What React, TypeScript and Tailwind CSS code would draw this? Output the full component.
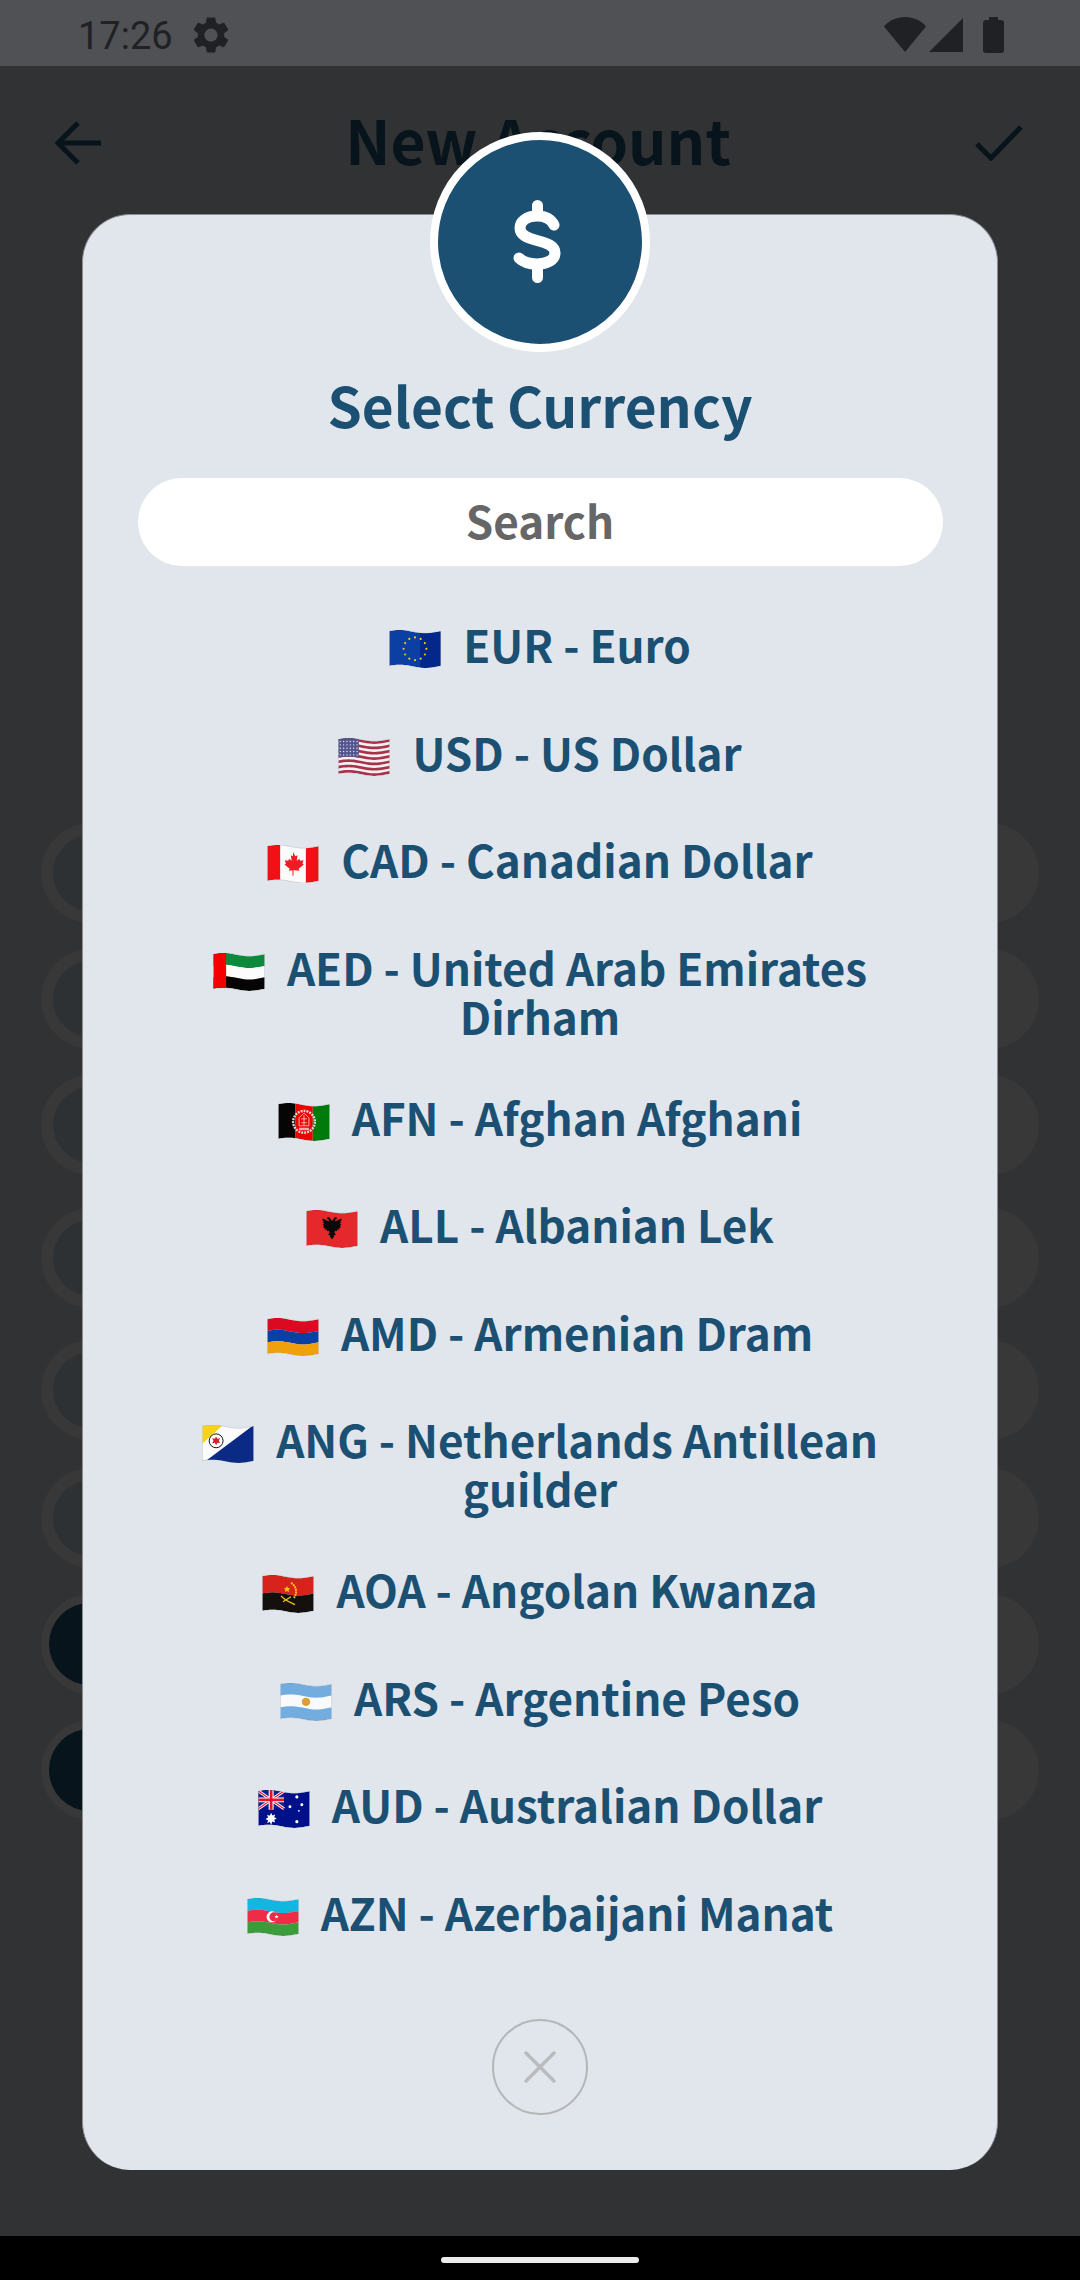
import { useId, type ReactNode } from 'react'

const FONT = "font-['Noto_Sans_CJK_SC','Noto_Sans',sans-serif]"

/* ── Flag helpers: the wave is a small sine over the flag cloth ── */
const W = 52
const H = 35
const waveTop = (u: number) => 1.65 - 1.65 * Math.sin(2 * Math.PI * (u + 0.05))
const pt = (u: number, t: number) => `${(u * W).toFixed(2)},${(waveTop(u) + t * H).toFixed(2)}`

function region(u0: number, u1: number, t0: number, t1: number) {
  const top: string[] = []
  const bottom: string[] = []
  for (let i = 0; i <= 20; i++) {
    const u = u0 + ((u1 - u0) * i) / 20
    top.push(pt(u, t0))
    bottom.unshift(pt(u, t1))
  }
  return [...top, ...bottom].join(' ')
}

const Band = ({ u = [0, 1], t = [0, 1], fill }: { u?: number[]; t?: number[]; fill: string }) => (
  <polygon points={region(u[0], u[1], t[0], t[1])} fill={fill} />
)

function Flag({ children }: { children: ReactNode }) {
  const id = useId()
  return (
    <svg viewBox="0 0 52 38.4" className="-my-[10px] mr-[22px] inline-block h-[38px] w-[52px] align-[5px]">
      <clipPath id={id}>
        <polygon points={region(0, 1, 0, 1)} />
      </clipPath>
      <g clipPath={`url(#${id})`}>{children}</g>
      <polygon points={region(0, 1, 0, 1)} fill="none" stroke="#000" strokeOpacity="0.12" strokeWidth="0.8" />
    </svg>
  )
}

const ringStars = Array.from({ length: 12 }, (_, i) => {
  const a = (i * Math.PI) / 6
  return [26 + 11.5 * Math.sin(a), 19 - 11.5 * Math.cos(a)]
})

const EurFlag = () => (
  <Flag>
    <Band fill="#0b3fa3" />
    <Band u={[0.6, 1]} fill="#03278a" />
    {ringStars.map(([x, y], i) => (
      <circle key={i} cx={x} cy={y} r="1.1" fill="#f5c518" />
    ))}
  </Flag>
)

const UsdFlag = () => (
  <Flag>
    <Band fill="#f4f1f2" />
    {[0, 2, 4, 6, 8, 10, 12].map((i) => (
      <Band key={i} t={[i / 13, (i + 1) / 13]} fill="#a8324a" />
    ))}
    <Band u={[0, 0.4]} t={[0, 7 / 13]} fill="#55568f" />
    {Array.from({ length: 30 }, (_, i) => (
      <circle key={i} cx={2 + (i % 6) * 3.4} cy={3.5 + Math.floor(i / 6) * 3.4} r="0.7" fill="#e6e6f2" />
    ))}
  </Flag>
)

const CadFlag = () => (
  <Flag>
    <Band fill="#fbfbfb" />
    <Band u={[0, 0.25]} fill="#f20f16" />
    <Band u={[0.75, 1]} fill="#f20f16" />
    <path
      d="M26 7l2.4 4.4 2.2-1-.8 5.6 2.6-2 .8 2 3.4-.6-1 3.6 1.4.8-5.2 4.2.6 2-4.6-.6-1.2 0-4.6.6.6-2-5.2-4.2 1.4-.8-1-3.6 3.4.6.8-2 2.6 2-.8-5.6 2.2 1z"
      fill="#ee1c25"
    />
    <rect x="25.5" y="25" width="1" height="6" fill="#ee1c25" />
  </Flag>
)

const AedFlag = () => (
  <Flag>
    <Band t={[0, 0.34]} fill="#0b8a3c" />
    <Band t={[0.34, 0.67]} fill="#fcfcfc" />
    <Band t={[0.67, 1]} fill="#050505" />
    <Band u={[0, 0.25]} fill="#f40000" />
  </Flag>
)

const AfnFlag = () => (
  <Flag>
    <Band u={[0, 0.33]} fill="#050505" />
    <Band u={[0.33, 0.67]} fill="#ee0000" />
    <Band u={[0.67, 1]} fill="#007a0a" />
    <circle cx="26" cy="19" r="11" fill="none" stroke="#d9d9d9" strokeWidth="2.4" strokeDasharray="2 1" />
    <path d="M26 10l5 5v8H21v-8zM26 12v11M23 16h6M23 20h6" fill="none" stroke="#ffc9c9" strokeWidth="1" strokeOpacity="0.85" />
    <rect x="21" y="25" width="10" height="2.500" fill="#f5f5f5" fillOpacity="0.7" />
  </Flag>
)

/* half of the eagle, mirrored around x = 26 */
const eagleHalf = [
  [0, 11], [1.5, 9], [3, 7], [5.5, 8], [3.5, 9.5], [3, 11.5], [5, 10.5], [9.5, 8.5], [9.5, 11], [8, 11.5],
  [9.5, 13], [8, 13.5], [9.5, 15.5], [8, 16], [9, 18], [7, 18], [7.5, 20], [5.5, 19.5], [5, 21.5], [3, 21],
  [2.5, 23], [4, 25], [2, 25.5], [2, 27], [0, 29.5],
]
const eaglePoints = [
  ...eagleHalf.map(([x, y]) => `${26 + x},${y}`),
  ...[...eagleHalf].reverse().map(([x, y]) => `${26 - x},${y}`),
].join(' ')

const AllFlag = () => (
  <Flag>
    <Band fill="#e4282c" />
    <polygon points={eaglePoints} fill="#0a0a0a" />
  </Flag>
)

const AmdFlag = () => (
  <Flag>
    <Band t={[0, 0.34]} fill="#dc0a20" />
    <Band t={[0.34, 0.67]} fill="#0a3fa6" />
    <Band t={[0.67, 1]} fill="#f0a00a" />
  </Flag>
)

const AngFlag = () => (
  <Flag>
    <Band fill="#fbfbfb" />
    <polygon points="0,0 21,0 0,19" fill="#f6d21c" />
    <polygon points="0,39 52,0 52,39" fill="#0a2a85" />
    <circle cx="14" cy="16" r="7" fill="#fff" stroke="#111" strokeWidth="1" />
    <path d="M14 11.500l1.300 2.500 2.700-.5-1.300 2.500 1.300 2.500-2.700-.5-1.300 2.500-1.300-2.500-2.700.5 1.300-2.500-1.300-2.500 2.700.5z" fill="#d8202a" />
  </Flag>
)

const AoaFlag = () => (
  <Flag>
    <Band t={[0, 0.5]} fill="#d8231c" />
    <Band t={[0.5, 1]} fill="#14100e" />
    <path d="M29 8a10 10 0 0 1 3 15" fill="none" stroke="#f5c518" strokeWidth="2" strokeDasharray="2 .6" />
    <path d="M19 21c3 4 8 6 14 9M21 27l8-5" fill="none" stroke="#f5c518" strokeWidth="1.300" />
    <path d="M25 11l1 2.200 2.300.2-1.700 1.600.5 2.300-2.100-1.200-2.100 1.200.5-2.300-1.700-1.600 2.300-.2z" fill="#f5c518" />
  </Flag>
)

const ArsFlag = () => (
  <Flag>
    <Band fill="#f8fafc" />
    <Band t={[0, 0.33]} fill="#73ade0" />
    <Band t={[0.67, 1]} fill="#73ade0" />
    <circle cx="26" cy="19" r="3.700" fill="#e0a030" stroke="#c98a1e" strokeWidth="0.8" />
  </Flag>
)

const AudFlag = () => (
  <Flag>
    <Band fill="#00108a" />
    <Band u={[0, 0.5]} t={[0, 0.5]} fill="#10208f" />
    <path d="M0 1l26 18M26 1L0 19" stroke="#fff" strokeWidth="3" />
    <path d="M0 1l26 18M26 1L0 19" stroke="#e8112d" strokeWidth="1.100" />
    <path d="M13 0v20M0 10h26" stroke="#fff" strokeWidth="5" />
    <path d="M13 0v20M0 10h26" stroke="#e8112d" strokeWidth="2.800" />
    <path d="M13 23l1.300 2.700 2.800-1-1 2.800 2.700 1.300-2.700 1.300 1 2.800-2.800-1L13 35l-1.300-2.700-2.800 1 1-2.800-2.700-1.300 2.700-1.300-1-2.800 2.800 1z" fill="#fff" />
    {[
      [39, 7, 1.6],
      [32, 17, 1.5],
      [44, 15, 1.5],
      [41, 21, 0.9],
      [39, 32, 1.6],
    ].map(([x, y, r], i) => (
      <circle key={i} cx={x} cy={y} r={r} fill="#fff" />
    ))}
  </Flag>
)

const AznFlag = () => (
  <Flag>
    <Band t={[0, 0.34]} fill="#12b7e0" />
    <Band t={[0.34, 0.67]} fill="#ee2c48" />
    <Band t={[0.67, 1]} fill="#3c9c3c" />
    <circle cx="25" cy="19" r="5.500" fill="#fff" />
    <circle cx="26.800" cy="19" r="4.500" fill="#ee2c48" />
    <path d="M29.500 16.700l.6 1.500 1.600-.1-1.200 1 .5 1.600-1.400-.9-1.400.9.500-1.600-1.200-1 1.600.1z" fill="#fff" />
  </Flag>
)

const currencies: { flag: ReactNode; label: string; wrap?: boolean }[] = [
  { flag: <EurFlag />, label: 'EUR - Euro' },
  { flag: <UsdFlag />, label: 'USD - US Dollar' },
  { flag: <CadFlag />, label: 'CAD - Canadian Dollar' },
  { flag: <AedFlag />, label: 'AED - United Arab Emirates Dirham', wrap: true },
  { flag: <AfnFlag />, label: 'AFN - Afghan Afghani' },
  { flag: <AllFlag />, label: 'ALL - Albanian Lek' },
  { flag: <AmdFlag />, label: 'AMD - Armenian Dram' },
  { flag: <AngFlag />, label: 'ANG - Netherlands Antillean guilder', wrap: true },
  { flag: <AoaFlag />, label: 'AOA - Angolan Kwanza' },
  { flag: <ArsFlag />, label: 'ARS - Argentine Peso' },
  { flag: <AudFlag />, label: 'AUD - Australian Dollar' },
  { flag: <AznFlag />, label: 'AZN - Azerbaijani Manat' },
]

/* ── Dimmed form rows behind the dialog ── */
const backdropRows = [
  { h: 'mt-0', dark: false },
  { h: 'mt-[26px]', dark: false },
  { h: 'mt-[26px]', dark: false },
  { h: 'mt-[33px]', dark: false },
  { h: 'mt-[32px]', dark: false },
  { h: 'mt-[28px]', dark: false },
  { h: 'mt-[26px]', dark: true },
  { h: 'mt-[26px]', dark: true },
]

function StatusBar() {
  return (
    <div className="flex h-[66px] items-center justify-between bg-[#505155] pl-[78px] pr-[76px] pt-[4px] text-[#202124]">
      <div className="flex items-center gap-[16px]">
        <span className="mt-[2px] font-['Roboto',sans-serif] text-[38px] leading-none">17:26</span>
        <svg viewBox="0 0 24 24" className="h-[44px] w-[44px]" fill="currentColor">
          <path d="M19.140 12.940c.04-.3.060-.61.060-.94 0-.32-.02-.64-.07-.94l2.030-1.580a.49.49 0 0 0 .12-.61l-1.920-3.320a.488.488 0 0 0-.59-.22l-2.390.96c-.5-.38-1.030-.7-1.620-.94l-.36-2.540a.484.484 0 0 0-.48-.41h-3.840c-.24 0-.43.170-.47.410l-.36 2.540c-.59.24-1.130.57-1.620.94l-2.390-.96c-.22-.08-.47 0-.59.22L2.740 8.870c-.12.210-.08.470.12.610l2.030 1.580c-.05.3-.09.630-.09.940s.02.640.07.940l-2.030 1.580a.49.49 0 0 0-.12.610l1.920 3.320c.12.220.37.290.59.220l2.390-.96c.5.380 1.030.7 1.620.94l.36 2.540c.05.240.24.410.48.410h3.840c.24 0 .44-.170.47-.41l.36-2.540c.59-.24 1.130-.56 1.620-.94l2.390.96c.22.080.47 0 .59-.22l1.920-3.320c.12-.22.070-.47-.12-.61l-2.010-1.580zM12 15.600c-1.980 0-3.600-1.620-3.600-3.600s1.620-3.600 3.600-3.600 3.600 1.620 3.600 3.600-1.620 3.600-3.600 3.600z" />
        </svg>
      </div>
      <div className="flex items-center">
        <svg viewBox="0 0 42 36" className="h-[36px] w-[42px]" fill="currentColor">
          <path d="M21 35L0 9.500C5 3.500 12.500 0 21 0s16 3.500 21 9.500z" />
        </svg>
        <svg viewBox="0 0 34 34" className="ml-[3px] h-[34px] w-[34px]" fill="currentColor">
          <path d="M34 0v34H0z" />
        </svg>
        <svg viewBox="0 0 21 36" className="ml-[20px] h-[36px] w-[21px]" fill="currentColor">
          <path d="M6 0h9v3h3a3 3 0 0 1 3 3v27a3 3 0 0 1-3 3H3a3 3 0 0 1-3-3V6a3 3 0 0 1 3-3h3z" />
        </svg>
      </div>
    </div>
  )
}

function Backdrop() {
  return (
    <div className="flex h-[2170px] flex-col bg-[#313234]">
      <div className="flex h-[132px] items-center justify-between pl-[55px] pr-[57px] pt-[22px] text-[#07141b]">
        <svg viewBox="0 0 46 44" className="h-[44px] w-[46px]" fill="none" stroke="currentColor" strokeWidth="5">
          <path d="M23 2L3 22l20 20M3 22h43" />
        </svg>
        <span className={`${FONT} mb-[8px] text-[60.500px] font-bold leading-none`}>New Account</span>
        <svg viewBox="0 0 48 36" className="h-[36px] w-[48px]" fill="none" stroke="currentColor" strokeWidth="5">
          <path d="M2 19l14 14L46 2" />
        </svg>
      </div>
      <div className="mt-[625px] flex flex-col px-[41px]">
        {backdropRows.map((row, i) => (
          <div
            key={i}
            className={`${row.h} flex h-[100px] items-center rounded-full bg-[#383838] ${row.dark ? 'pl-[8px]' : 'pl-[12px]'}`}
          >
            <div className={row.dark ? 'h-[82px] w-[300px] rounded-full bg-[#07141b]' : 'h-[76px] w-[300px] rounded-full bg-[#2d3134]'} />
          </div>
        ))}
      </div>
    </div>
  )
}

export default function App() {
  return (
    <div className={`relative h-[2280px] w-[1080px] overflow-hidden bg-[#313234] ${FONT}`}>
      <StatusBar />
      <Backdrop />

      {/* gesture bar */}
      <div className="absolute inset-x-0 bottom-0 flex h-[44px] justify-center bg-black pt-[21px]">
        <div className="h-[6px] w-[198px] rounded-full bg-[#ececec]" />
      </div>

      {/* ── Currency dialog ── */}
      <div className="absolute left-[82px] top-[214px] flex h-[1956px] w-[916px] flex-col items-center rounded-[48px] border-x border-t border-[#898c90] bg-[#e1e6ed] pt-[154px]">
        <div className="absolute left-1/2 top-[-83px] flex h-[220px] w-[220px] -translate-x-1/2 items-center justify-center rounded-full border-[8px] border-white bg-[#1b5073]">
          <svg viewBox="0 0 120 120" className="h-[120px] w-[120px]" fill="none" stroke="#fff" strokeWidth="11" strokeLinecap="round">
            <path d="M74 43C71 37 65 34 57 34C47 34 40 39 40 46C40 53 47 56 57 58.500C67 61 75 64 75 71C75 78 67 82 57 82C49 82 43 80 39 76" />
            <path d="M57.500 23.500v8M57.500 85v10.500" />
          </svg>
        </div>

        <h1 className="text-[55px] font-bold leading-[70px] text-[#1b5073]">Select Currency</h1>

        <input
          readOnly
          placeholder="Search"
          className="mt-[39px] h-[88px] w-[805px] rounded-full bg-white pb-[5px] text-center text-[44px] font-bold text-[#666] outline-none placeholder:text-[#666]"
        />

        <ul className="mt-[25px] flex w-[740px] flex-col">
          {currencies.map((c) => (
            <li
              key={c.label}
              className={`pt-[29px] text-center text-[44px] font-bold leading-[49px] text-[#1b5073] ${c.wrap ? 'pb-[23px]' : 'pb-[29.5px]'}`}
            >
              {c.flag}
              {c.label}
            </li>
          ))}
        </ul>

        <button className="mt-[53px] flex h-[96px] w-[96px] items-center justify-center rounded-full border-2 border-[#b4b6b8]">
          <svg viewBox="0 0 32 32" className="h-[32px] w-[32px]" stroke="#b9bbbd" strokeWidth="3.500" strokeLinecap="round">
            <path d="M2 2l28 28M30 2L2 30" />
          </svg>
        </button>
      </div>
    </div>
  )
}
